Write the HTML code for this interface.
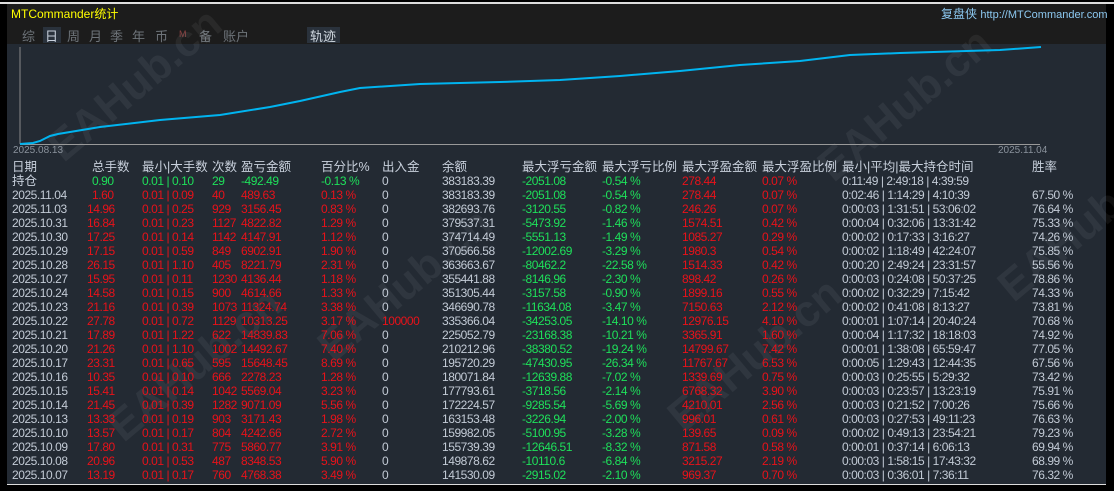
<!DOCTYPE html><html><head><meta charset="utf-8"><style>
*{margin:0;padding:0;box-sizing:border-box}
body{width:1114px;height:491px;background:#000;position:relative;overflow:hidden;font-family:"Liberation Sans","Noto Sans CJK SC",sans-serif;font-size:12px}
.top{position:absolute;left:7px;top:4px;width:1099px;height:40px;background:#1c1c1c}
.panel{position:absolute;left:7px;top:44px;width:1099px;height:441px;background:#232a33;border-bottom:1px solid #ddd}
.a{position:absolute;white-space:nowrap;line-height:14px;letter-spacing:-0.45px}
.r{color:#e8121a}.g{color:#1ee05a}.w{color:#c3cbd6}.h{color:#c8d0dc;font-size:12.5px;letter-spacing:0}
.wm{position:absolute;color:rgba(255,255,255,0.06);font-size:44px;font-weight:bold;transform:rotate(-40deg);white-space:nowrap}
.tab{position:absolute;top:26px;color:#6e747a;font-size:13px}
</style></head><body>
<div style="position:absolute;left:0;top:2px;width:1114px;height:2px;background:#ddd"></div>
<div class="top"></div>
<div class="a" style="left:11px;top:7px;color:#ffff00;font-size:12px;letter-spacing:0">MTCommander统计</div>
<div class="a" style="left:941px;top:7px;color:#8cc8f0;font-size:12px;letter-spacing:0">复盘侠 <span style="font-size:11px">http://MTCommander.com</span></div>
<div class="tab" style="left:22px">综</div>
<div style="position:absolute;left:43px;top:27px;width:18px;height:16px;background:#2a323c"></div>
<div class="tab" style="left:45px;color:#c8d0dc">日</div>
<div class="tab" style="left:67px">周</div>
<div class="tab" style="left:89px">月</div>
<div class="tab" style="left:110px">季</div>
<div class="tab" style="left:132px">年</div>
<div class="tab" style="left:155px">币</div>
<div class="tab" style="left:179px;font-size:9px;top:29px;color:#8a4040">M</div>
<div class="tab" style="left:199px">备</div>
<div class="tab" style="left:223px">账户</div>
<div style="position:absolute;left:307px;top:27px;width:33px;height:16px;background:#2a323c"></div>
<div class="tab" style="left:310px;color:#d0d8e0">轨迹</div>
<div class="panel"></div>
<div class="wm" style="left:30px;top:60px">EAHub.cn</div>
<div class="wm" style="left:300px;top:260px">EAHub.cn</div>
<div class="wm" style="left:90px;top:340px">EAHub.cn</div>
<div class="wm" style="left:800px;top:80px">EAHub.cn</div>
<div class="wm" style="left:650px;top:330px">EAHub.cn</div>
<div class="wm" style="left:980px;top:200px">EAHub.cn</div>
<svg style="position:absolute;left:0;top:0" width="1114" height="491">
<line x1="20" y1="47" x2="20" y2="144" stroke="#888" stroke-width="1"/>
<line x1="20" y1="144.5" x2="1040" y2="144.5" stroke="#999" stroke-width="1"/>
<polyline fill="none" stroke="#00b4f0" stroke-width="2" points="20,144 33,143 40,141 50,136 58,134 100,127 160,120 220,115 270,107 300,101 340,92 360,88 420,84 500,82 560,80 620,76 680,71 740,65 800,61 850,55 900,53 1000,50 1041,47"/>
</svg>
<div class="a" style="left:13px;top:144px;color:#8a929c;font-size:10px;letter-spacing:0">2025.08.13</div>
<div class="a" style="left:998px;top:144px;color:#8a929c;font-size:10px;letter-spacing:0">2025.11.04</div>
<div class="a h" style="top:160px;left:12px">日期</div><div class="a h" style="top:160px;left:92px">总手数</div><div class="a h" style="top:160px;left:142px">最小|大手数</div><div class="a h" style="top:160px;left:212px">次数</div><div class="a h" style="top:160px;left:241px">盈亏金额</div><div class="a h" style="top:160px;left:321px">百分比%</div><div class="a h" style="top:160px;left:382px">出入金</div><div class="a h" style="top:160px;left:442px">余额</div><div class="a h" style="top:160px;left:522px">最大浮亏金额</div><div class="a h" style="top:160px;left:602px">最大浮亏比例</div><div class="a h" style="top:160px;left:682px">最大浮盈金额</div><div class="a h" style="top:160px;left:762px">最大浮盈比例</div><div class="a h" style="top:160px;left:842px">最小|平均|最大持仓时间</div><div class="a h" style="top:160px;left:1032px">胜率</div>
<div class="a h" style="top:174px;left:12px">持仓</div><div class="a g" style="top:174px;left:92px">0.90</div><div class="a g" style="top:174px;left:142px">0.01 | 0.10</div><div class="a g" style="top:174px;left:212px">29</div><div class="a g" style="top:174px;left:241px">-492.49</div><div class="a g" style="top:174px;left:321px">-0.13 %</div><div class="a w" style="top:174px;left:382px">0</div><div class="a w" style="top:174px;left:442px">383183.39</div><div class="a g" style="top:174px;left:522px">-2051.08</div><div class="a g" style="top:174px;left:602px">-0.54 %</div><div class="a r" style="top:174px;left:682px">278.44</div><div class="a r" style="top:174px;left:762px">0.07 %</div><div class="a w" style="top:174px;left:842px">0:11:49 | 2:49:18 | 4:39:59</div>
<div style="position:absolute;left:0;top:188px">
<div class="a w" style="top:0;left:12px">2025.11.04</div><div class="a r" style="top:0;left:92px">1.60</div><div class="a r" style="top:0;left:142px">0.01 | 0.09</div><div class="a r" style="top:0;left:212px">40</div><div class="a r" style="top:0;left:241px">489.63</div><div class="a r" style="top:0;left:321px">0.13 %</div><div class="a w" style="top:0;left:382px">0</div><div class="a w" style="top:0;left:442px">383183.39</div><div class="a g" style="top:0;left:522px">-2051.08</div><div class="a g" style="top:0;left:602px">-0.54 %</div><div class="a r" style="top:0;left:682px">278.44</div><div class="a r" style="top:0;left:762px">0.07 %</div><div class="a w" style="top:0;left:842px">0:02:46 | 1:14:29 | 4:10:39</div><div class="a w" style="top:0;left:1032px">67.50 %</div>
<div class="a w" style="top:14px;left:12px">2025.11.03</div><div class="a r" style="top:14px;left:87px">14.96</div><div class="a r" style="top:14px;left:142px">0.01 | 0.25</div><div class="a r" style="top:14px;left:212px">929</div><div class="a r" style="top:14px;left:241px">3156.45</div><div class="a r" style="top:14px;left:321px">0.83 %</div><div class="a w" style="top:14px;left:382px">0</div><div class="a w" style="top:14px;left:442px">382693.76</div><div class="a g" style="top:14px;left:522px">-3120.55</div><div class="a g" style="top:14px;left:602px">-0.82 %</div><div class="a r" style="top:14px;left:682px">246.26</div><div class="a r" style="top:14px;left:762px">0.07 %</div><div class="a w" style="top:14px;left:842px">0:00:03 | 1:31:51 | 53:06:02</div><div class="a w" style="top:14px;left:1032px">76.64 %</div>
<div class="a w" style="top:28px;left:12px">2025.10.31</div><div class="a r" style="top:28px;left:87px">16.84</div><div class="a r" style="top:28px;left:142px">0.01 | 0.23</div><div class="a r" style="top:28px;left:212px">1127</div><div class="a r" style="top:28px;left:241px">4822.82</div><div class="a r" style="top:28px;left:321px">1.29 %</div><div class="a w" style="top:28px;left:382px">0</div><div class="a w" style="top:28px;left:442px">379537.31</div><div class="a g" style="top:28px;left:522px">-5473.92</div><div class="a g" style="top:28px;left:602px">-1.46 %</div><div class="a r" style="top:28px;left:682px">1574.51</div><div class="a r" style="top:28px;left:762px">0.42 %</div><div class="a w" style="top:28px;left:842px">0:00:04 | 0:32:06 | 13:31:42</div><div class="a w" style="top:28px;left:1032px">75.33 %</div>
<div class="a w" style="top:42px;left:12px">2025.10.30</div><div class="a r" style="top:42px;left:87px">17.25</div><div class="a r" style="top:42px;left:142px">0.01 | 0.14</div><div class="a r" style="top:42px;left:212px">1142</div><div class="a r" style="top:42px;left:241px">4147.91</div><div class="a r" style="top:42px;left:321px">1.12 %</div><div class="a w" style="top:42px;left:382px">0</div><div class="a w" style="top:42px;left:442px">374714.49</div><div class="a g" style="top:42px;left:522px">-5551.13</div><div class="a g" style="top:42px;left:602px">-1.49 %</div><div class="a r" style="top:42px;left:682px">1085.27</div><div class="a r" style="top:42px;left:762px">0.29 %</div><div class="a w" style="top:42px;left:842px">0:00:02 | 0:17:33 | 3:16:27</div><div class="a w" style="top:42px;left:1032px">74.26 %</div>
<div class="a w" style="top:56px;left:12px">2025.10.29</div><div class="a r" style="top:56px;left:87px">17.15</div><div class="a r" style="top:56px;left:142px">0.01 | 0.59</div><div class="a r" style="top:56px;left:212px">849</div><div class="a r" style="top:56px;left:241px">6902.91</div><div class="a r" style="top:56px;left:321px">1.90 %</div><div class="a w" style="top:56px;left:382px">0</div><div class="a w" style="top:56px;left:442px">370566.58</div><div class="a g" style="top:56px;left:522px">-12002.69</div><div class="a g" style="top:56px;left:602px">-3.29 %</div><div class="a r" style="top:56px;left:682px">1980.3</div><div class="a r" style="top:56px;left:762px">0.54 %</div><div class="a w" style="top:56px;left:842px">0:00:02 | 1:18:49 | 42:24:07</div><div class="a w" style="top:56px;left:1032px">75.85 %</div>
<div class="a w" style="top:70px;left:12px">2025.10.28</div><div class="a r" style="top:70px;left:87px">26.15</div><div class="a r" style="top:70px;left:142px">0.01 | 1.10</div><div class="a r" style="top:70px;left:212px">405</div><div class="a r" style="top:70px;left:241px">8221.79</div><div class="a r" style="top:70px;left:321px">2.31 %</div><div class="a w" style="top:70px;left:382px">0</div><div class="a w" style="top:70px;left:442px">363663.67</div><div class="a g" style="top:70px;left:522px">-80462.2</div><div class="a g" style="top:70px;left:602px">-22.58 %</div><div class="a r" style="top:70px;left:682px">1514.33</div><div class="a r" style="top:70px;left:762px">0.42 %</div><div class="a w" style="top:70px;left:842px">0:00:20 | 2:49:24 | 23:31:57</div><div class="a w" style="top:70px;left:1032px">55.56 %</div>
<div class="a w" style="top:84px;left:12px">2025.10.27</div><div class="a r" style="top:84px;left:87px">15.95</div><div class="a r" style="top:84px;left:142px">0.01 | 0.11</div><div class="a r" style="top:84px;left:212px">1230</div><div class="a r" style="top:84px;left:241px">4136.44</div><div class="a r" style="top:84px;left:321px">1.18 %</div><div class="a w" style="top:84px;left:382px">0</div><div class="a w" style="top:84px;left:442px">355441.88</div><div class="a g" style="top:84px;left:522px">-8146.96</div><div class="a g" style="top:84px;left:602px">-2.30 %</div><div class="a r" style="top:84px;left:682px">898.42</div><div class="a r" style="top:84px;left:762px">0.26 %</div><div class="a w" style="top:84px;left:842px">0:00:03 | 0:24:08 | 50:37:25</div><div class="a w" style="top:84px;left:1032px">78.86 %</div>
<div class="a w" style="top:98px;left:12px">2025.10.24</div><div class="a r" style="top:98px;left:87px">14.58</div><div class="a r" style="top:98px;left:142px">0.01 | 0.15</div><div class="a r" style="top:98px;left:212px">900</div><div class="a r" style="top:98px;left:241px">4614.66</div><div class="a r" style="top:98px;left:321px">1.33 %</div><div class="a w" style="top:98px;left:382px">0</div><div class="a w" style="top:98px;left:442px">351305.44</div><div class="a g" style="top:98px;left:522px">-3157.58</div><div class="a g" style="top:98px;left:602px">-0.90 %</div><div class="a r" style="top:98px;left:682px">1899.16</div><div class="a r" style="top:98px;left:762px">0.55 %</div><div class="a w" style="top:98px;left:842px">0:00:02 | 0:32:29 | 7:15:42</div><div class="a w" style="top:98px;left:1032px">74.33 %</div>
<div class="a w" style="top:112px;left:12px">2025.10.23</div><div class="a r" style="top:112px;left:87px">21.16</div><div class="a r" style="top:112px;left:142px">0.01 | 0.39</div><div class="a r" style="top:112px;left:212px">1073</div><div class="a r" style="top:112px;left:241px">11324.74</div><div class="a r" style="top:112px;left:321px">3.38 %</div><div class="a w" style="top:112px;left:382px">0</div><div class="a w" style="top:112px;left:442px">346690.78</div><div class="a g" style="top:112px;left:522px">-11634.08</div><div class="a g" style="top:112px;left:602px">-3.47 %</div><div class="a r" style="top:112px;left:682px">7150.63</div><div class="a r" style="top:112px;left:762px">2.12 %</div><div class="a w" style="top:112px;left:842px">0:00:02 | 0:41:08 | 8:13:27</div><div class="a w" style="top:112px;left:1032px">73.81 %</div>
<div class="a w" style="top:126px;left:12px">2025.10.22</div><div class="a r" style="top:126px;left:87px">27.78</div><div class="a r" style="top:126px;left:142px">0.01 | 0.72</div><div class="a r" style="top:126px;left:212px">1129</div><div class="a r" style="top:126px;left:241px">10313.25</div><div class="a r" style="top:126px;left:321px">3.17 %</div><div class="a r" style="top:126px;left:382px">100000</div><div class="a w" style="top:126px;left:442px">335366.04</div><div class="a g" style="top:126px;left:522px">-34253.05</div><div class="a g" style="top:126px;left:602px">-14.10 %</div><div class="a r" style="top:126px;left:682px">12976.15</div><div class="a r" style="top:126px;left:762px">4.10 %</div><div class="a w" style="top:126px;left:842px">0:00:01 | 1:07:14 | 20:40:24</div><div class="a w" style="top:126px;left:1032px">70.68 %</div>
<div class="a w" style="top:140px;left:12px">2025.10.21</div><div class="a r" style="top:140px;left:87px">17.89</div><div class="a r" style="top:140px;left:142px">0.01 | 1.22</div><div class="a r" style="top:140px;left:212px">622</div><div class="a r" style="top:140px;left:241px">14839.83</div><div class="a r" style="top:140px;left:321px">7.06 %</div><div class="a w" style="top:140px;left:382px">0</div><div class="a w" style="top:140px;left:442px">225052.79</div><div class="a g" style="top:140px;left:522px">-23168.38</div><div class="a g" style="top:140px;left:602px">-10.21 %</div><div class="a r" style="top:140px;left:682px">3365.91</div><div class="a r" style="top:140px;left:762px">1.60 %</div><div class="a w" style="top:140px;left:842px">0:00:04 | 1:17:32 | 18:18:03</div><div class="a w" style="top:140px;left:1032px">74.92 %</div>
<div class="a w" style="top:154px;left:12px">2025.10.20</div><div class="a r" style="top:154px;left:87px">21.26</div><div class="a r" style="top:154px;left:142px">0.01 | 1.10</div><div class="a r" style="top:154px;left:212px">1002</div><div class="a r" style="top:154px;left:241px">14492.67</div><div class="a r" style="top:154px;left:321px">7.40 %</div><div class="a w" style="top:154px;left:382px">0</div><div class="a w" style="top:154px;left:442px">210212.96</div><div class="a g" style="top:154px;left:522px">-38380.52</div><div class="a g" style="top:154px;left:602px">-19.24 %</div><div class="a r" style="top:154px;left:682px">14799.67</div><div class="a r" style="top:154px;left:762px">7.42 %</div><div class="a w" style="top:154px;left:842px">0:00:01 | 1:38:08 | 65:59:47</div><div class="a w" style="top:154px;left:1032px">77.05 %</div>
<div class="a w" style="top:168px;left:12px">2025.10.17</div><div class="a r" style="top:168px;left:87px">23.31</div><div class="a r" style="top:168px;left:142px">0.01 | 0.65</div><div class="a r" style="top:168px;left:212px">595</div><div class="a r" style="top:168px;left:241px">15648.45</div><div class="a r" style="top:168px;left:321px">8.69 %</div><div class="a w" style="top:168px;left:382px">0</div><div class="a w" style="top:168px;left:442px">195720.29</div><div class="a g" style="top:168px;left:522px">-47430.95</div><div class="a g" style="top:168px;left:602px">-26.34 %</div><div class="a r" style="top:168px;left:682px">11767.67</div><div class="a r" style="top:168px;left:762px">6.53 %</div><div class="a w" style="top:168px;left:842px">0:00:05 | 1:29:43 | 12:44:35</div><div class="a w" style="top:168px;left:1032px">67.56 %</div>
<div class="a w" style="top:182px;left:12px">2025.10.16</div><div class="a r" style="top:182px;left:87px">10.35</div><div class="a r" style="top:182px;left:142px">0.01 | 0.10</div><div class="a r" style="top:182px;left:212px">666</div><div class="a r" style="top:182px;left:241px">2278.23</div><div class="a r" style="top:182px;left:321px">1.28 %</div><div class="a w" style="top:182px;left:382px">0</div><div class="a w" style="top:182px;left:442px">180071.84</div><div class="a g" style="top:182px;left:522px">-12639.88</div><div class="a g" style="top:182px;left:602px">-7.02 %</div><div class="a r" style="top:182px;left:682px">1339.69</div><div class="a r" style="top:182px;left:762px">0.75 %</div><div class="a w" style="top:182px;left:842px">0:00:03 | 0:25:55 | 5:29:32</div><div class="a w" style="top:182px;left:1032px">73.42 %</div>
<div class="a w" style="top:196px;left:12px">2025.10.15</div><div class="a r" style="top:196px;left:87px">15.41</div><div class="a r" style="top:196px;left:142px">0.01 | 0.14</div><div class="a r" style="top:196px;left:212px">1042</div><div class="a r" style="top:196px;left:241px">5569.04</div><div class="a r" style="top:196px;left:321px">3.23 %</div><div class="a w" style="top:196px;left:382px">0</div><div class="a w" style="top:196px;left:442px">177793.61</div><div class="a g" style="top:196px;left:522px">-3718.56</div><div class="a g" style="top:196px;left:602px">-2.14 %</div><div class="a r" style="top:196px;left:682px">6768.32</div><div class="a r" style="top:196px;left:762px">3.90 %</div><div class="a w" style="top:196px;left:842px">0:00:03 | 0:23:57 | 13:23:19</div><div class="a w" style="top:196px;left:1032px">75.91 %</div>
<div class="a w" style="top:210px;left:12px">2025.10.14</div><div class="a r" style="top:210px;left:87px">21.45</div><div class="a r" style="top:210px;left:142px">0.01 | 0.39</div><div class="a r" style="top:210px;left:212px">1282</div><div class="a r" style="top:210px;left:241px">9071.09</div><div class="a r" style="top:210px;left:321px">5.56 %</div><div class="a w" style="top:210px;left:382px">0</div><div class="a w" style="top:210px;left:442px">172224.57</div><div class="a g" style="top:210px;left:522px">-9285.54</div><div class="a g" style="top:210px;left:602px">-5.69 %</div><div class="a r" style="top:210px;left:682px">4210.01</div><div class="a r" style="top:210px;left:762px">2.56 %</div><div class="a w" style="top:210px;left:842px">0:00:03 | 0:21:52 | 7:00:26</div><div class="a w" style="top:210px;left:1032px">75.66 %</div>
<div class="a w" style="top:224px;left:12px">2025.10.13</div><div class="a r" style="top:224px;left:87px">13.33</div><div class="a r" style="top:224px;left:142px">0.01 | 0.19</div><div class="a r" style="top:224px;left:212px">903</div><div class="a r" style="top:224px;left:241px">3171.43</div><div class="a r" style="top:224px;left:321px">1.98 %</div><div class="a w" style="top:224px;left:382px">0</div><div class="a w" style="top:224px;left:442px">163153.48</div><div class="a g" style="top:224px;left:522px">-3226.94</div><div class="a g" style="top:224px;left:602px">-2.00 %</div><div class="a r" style="top:224px;left:682px">996.01</div><div class="a r" style="top:224px;left:762px">0.61 %</div><div class="a w" style="top:224px;left:842px">0:00:03 | 0:27:53 | 49:11:23</div><div class="a w" style="top:224px;left:1032px">76.63 %</div>
<div class="a w" style="top:238px;left:12px">2025.10.10</div><div class="a r" style="top:238px;left:87px">13.57</div><div class="a r" style="top:238px;left:142px">0.01 | 0.17</div><div class="a r" style="top:238px;left:212px">804</div><div class="a r" style="top:238px;left:241px">4242.66</div><div class="a r" style="top:238px;left:321px">2.72 %</div><div class="a w" style="top:238px;left:382px">0</div><div class="a w" style="top:238px;left:442px">159982.05</div><div class="a g" style="top:238px;left:522px">-5100.95</div><div class="a g" style="top:238px;left:602px">-3.28 %</div><div class="a r" style="top:238px;left:682px">139.65</div><div class="a r" style="top:238px;left:762px">0.09 %</div><div class="a w" style="top:238px;left:842px">0:00:02 | 0:49:13 | 23:54:21</div><div class="a w" style="top:238px;left:1032px">79.23 %</div>
<div class="a w" style="top:252px;left:12px">2025.10.09</div><div class="a r" style="top:252px;left:87px">17.80</div><div class="a r" style="top:252px;left:142px">0.01 | 0.31</div><div class="a r" style="top:252px;left:212px">775</div><div class="a r" style="top:252px;left:241px">5860.77</div><div class="a r" style="top:252px;left:321px">3.91 %</div><div class="a w" style="top:252px;left:382px">0</div><div class="a w" style="top:252px;left:442px">155739.39</div><div class="a g" style="top:252px;left:522px">-12646.51</div><div class="a g" style="top:252px;left:602px">-8.32 %</div><div class="a r" style="top:252px;left:682px">871.58</div><div class="a r" style="top:252px;left:762px">0.58 %</div><div class="a w" style="top:252px;left:842px">0:00:01 | 0:37:14 | 6:06:13</div><div class="a w" style="top:252px;left:1032px">69.94 %</div>
<div class="a w" style="top:266px;left:12px">2025.10.08</div><div class="a r" style="top:266px;left:87px">20.96</div><div class="a r" style="top:266px;left:142px">0.01 | 0.53</div><div class="a r" style="top:266px;left:212px">487</div><div class="a r" style="top:266px;left:241px">8348.53</div><div class="a r" style="top:266px;left:321px">5.90 %</div><div class="a w" style="top:266px;left:382px">0</div><div class="a w" style="top:266px;left:442px">149878.62</div><div class="a g" style="top:266px;left:522px">-10110.6</div><div class="a g" style="top:266px;left:602px">-6.84 %</div><div class="a r" style="top:266px;left:682px">3215.27</div><div class="a r" style="top:266px;left:762px">2.19 %</div><div class="a w" style="top:266px;left:842px">0:00:03 | 1:58:15 | 17:43:32</div><div class="a w" style="top:266px;left:1032px">68.99 %</div>
<div class="a w" style="top:280px;left:12px">2025.10.07</div><div class="a r" style="top:280px;left:87px">13.19</div><div class="a r" style="top:280px;left:142px">0.01 | 0.17</div><div class="a r" style="top:280px;left:212px">760</div><div class="a r" style="top:280px;left:241px">4768.38</div><div class="a r" style="top:280px;left:321px">3.49 %</div><div class="a w" style="top:280px;left:382px">0</div><div class="a w" style="top:280px;left:442px">141530.09</div><div class="a g" style="top:280px;left:522px">-2915.02</div><div class="a g" style="top:280px;left:602px">-2.10 %</div><div class="a r" style="top:280px;left:682px">969.37</div><div class="a r" style="top:280px;left:762px">0.70 %</div><div class="a w" style="top:280px;left:842px">0:00:03 | 0:36:01 | 7:36:11</div><div class="a w" style="top:280px;left:1032px">76.32 %</div>
</div>
</body></html>
